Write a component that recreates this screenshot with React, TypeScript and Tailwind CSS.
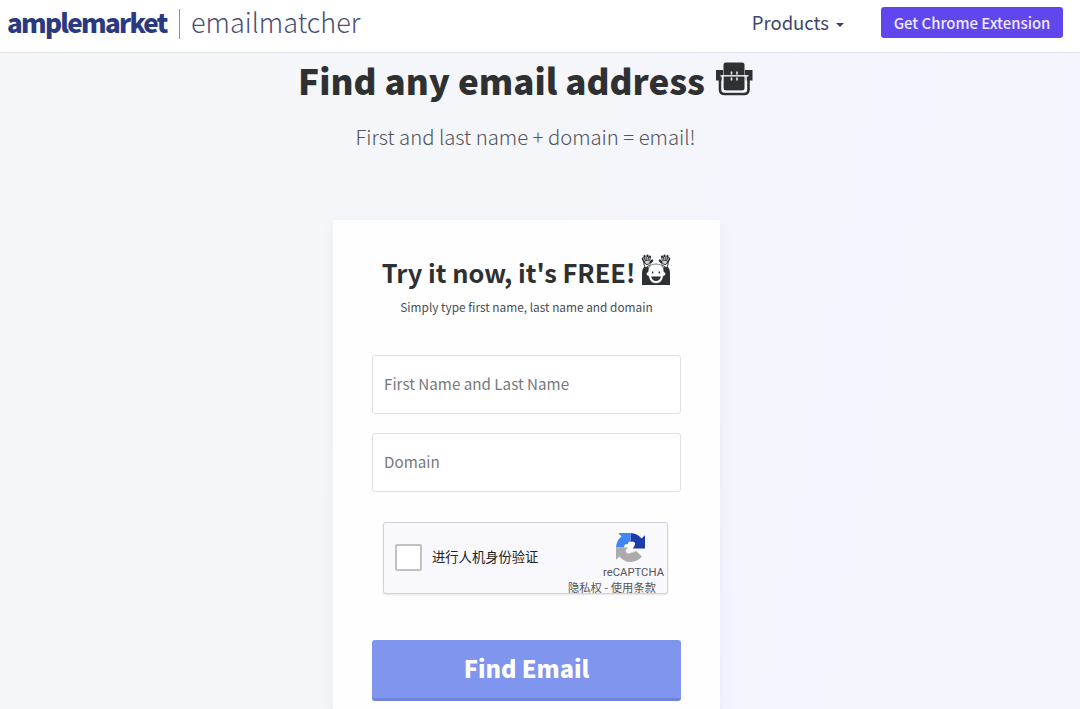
import React from "react";

const TurtleShellIcon = () => (
  <svg viewBox="0 0 38 36" className="h-9 w-[38px] shrink-0" fill="none">
    <path d="M1 9H8V19.500H1zM30 9H37.500V19.500H30z" fill="#2e3032" />
    <path d="M5 17V28.500Q5 33 9.500 33H29Q33.500 33 33.500 28.500V17" stroke="#2e3032" strokeWidth="2.600" />
    <rect x="8.500" y="1.500" width="21" height="28" rx="2.500" fill="#2e3032" />
    <path d="M5.500 14.800H33.500" stroke="#f4f6f9" strokeWidth="1.400" />
    <path d="M7.500 15V27.500Q7.500 30.500 10.500 30.500H28Q31 30.500 31 27.500V15" stroke="#f4f6f9" strokeWidth="1.600" />
    <path d="M16.500 10.500v3M22 10.500v3M16.500 16.500v3M22 16.500v3" stroke="#f4f6f9" strokeWidth="1.500" />
  </svg>
);

const Hand = () => (
  <g strokeLinecap="round" strokeLinejoin="round">
    <path d="M3.500 8.500 1.800 4.500M4.500 6.500 3.500 2M6.500 6 6.500 1.500M8 6.500 9 2.500M9.500 8.500 11.200 6.500M4.500 8.500H8.500" stroke="#2e3032" strokeWidth="2.200" />
    <path d="M3.500 6.500H9V8.500Q8 11 5 10.500Q3.500 9.500 3.500 6.500z" fill="#d4d5d6" stroke="#2e3032" strokeWidth="1" />
    <path d="M3.500 6.500 2.500 4.500M5 6 4.300 3.500M6.600 6V3.500M8 6.500 8.500 4" stroke="#c4c5c6" strokeWidth=".9" />
  </g>
);

const CelebrateIcon = () => (
  <svg viewBox="0 0 30 32" className="h-8 w-[30px] shrink-0" fill="none">
    <path d="M1 31V19Q1 14.500 4 12L11 15H19L26 12Q29 14.500 29 19V31z" fill="#2e3032" />
    <path d="M2.500 9.500 4.500 14 9.500 10.500M27.500 9.500 25.500 14 20.500 10.500" fill="#fff" stroke="#2e3032" strokeWidth="1" />
    <Hand />
    <g transform="translate(30 0) scale(-1 1)">
      <Hand />
    </g>
    <path d="M7 18Q7 10 15 10Q23 10 23 18Q25 18 24.500 20.500Q24 22 22.500 22Q21 29.500 15 29.500Q9 29.500 7.500 22Q6 22 5.500 20.500Q5 18 7 18z" fill="#fff" stroke="#2e3032" strokeWidth=".6" />
    <path d="M11.700 17.500v2M18.300 17.500v2" stroke="#2e3032" strokeWidth="1.300" />
    <path d="M10 22.500H20Q18.500 27 15 27Q11.500 27 10 22.500z" fill="#2e3032" />
  </svg>
);

const RecaptchaLogo = () => (
  <svg viewBox="0 0 64 64" className="h-[29px] w-[29px]">
    <path d="M64 34V4.700l-7.600 7.600A32 32 0 0 0 32 0V20Q37 17 40 20Q43 22 42 26L37 34z" fill="#1c3aa9" />
    <path d="M32 0H4.700l7.600 7.600A32 32 0 0 0 0 32H18Q17 27 21 25Q24 23 27 25Q25 20 32 18z" fill="#4285f4" />
    <path d="M0 32v27.300l7.600-7.600A32 32 0 0 0 32 64c10 0 19-4.500 25-12L44 39Q40 44 34 43Q30 47 24 44Q20 42 22 37L27 32z" fill="#ababab" />
  </svg>
);

const Navbar = () => (
  <header className="flex h-[53px] shrink-0 items-start border-b border-[#e0e3e7] bg-white pr-[17px] pl-[7px]">
    <div className="flex items-center pt-[4px] text-[#2b3a80]">
      <span className="w-[161px] text-[26px] leading-[36px] font-black tracking-[-1.7px]">
        amplemarket
      </span>
      <span className="mx-[11px] mt-1 h-[30px] w-px bg-[#8c90ae]" />
      <span className="text-[27px] leading-[36px] font-light text-[#4c4f75]">emailmatcher</span>
    </div>
    <nav className="ml-auto flex items-start">
      <a className="mt-[8px] flex items-center text-[18.5px] leading-7 text-[#41456f]">
        Products
        <span className="mt-[5px] ml-[7px] border-x-4 border-t-4 border-x-transparent border-t-[#3a3d5c]" />
      </a>
      <button className="mt-[7px] ml-[37px] h-[31px] w-[182px] rounded-[3px] bg-[#6047ed] text-[14.9px] leading-[30px] font-medium whitespace-nowrap text-[#eeeaff]">
        Get Chrome Extension
      </button>
    </nav>
  </header>
);

const Recaptcha = () => (
  <div className="mt-[30px] ml-[11px] flex h-[72px] w-[285px] justify-between rounded-[3px] border border-[#d3d3d6] bg-[#f9f8fc] shadow-[0_1px_2px_rgba(0,0,0,0.1)]">
    <div className="flex items-center pb-[2px] pl-[11px]">
      <span className="h-[27px] w-[27px] rounded-[2px] border-2 border-[#c1c1c4] bg-white" />
      <span className="ml-[10px] text-[13.3px] leading-5 text-[#222]">进行人机身份验证</span>
    </div>
    <div className="flex flex-col items-end pt-[10px] pr-[3px] text-[#555]">
      <span className="mr-[19px]">
        <RecaptchaLogo />
      </span>
      <span className="mt-[4px] font-['Roboto','Liberation_Sans',sans-serif] text-[11.3px] leading-[14px] whitespace-nowrap">
        reCAPTCHA
      </span>
      <span className="mr-2 text-[11.3px] leading-[14px] whitespace-nowrap">隐私权 - 使用条款</span>
    </div>
  </div>
);

const inputClass =
  "block h-[59px] w-full rounded-[3px] border border-[#dfdfe4] bg-white px-[11px] pb-[3px] text-[15.2px] placeholder:text-[#77797b] placeholder:opacity-100";

const EmailForm = () => (
  <form className="mt-[69px] h-[520px] w-[387px] bg-[#fefeff] px-[39px] pt-[32px] shadow-[0_8px_16px_rgba(60,70,120,0.06)]">
    <h2 className="flex h-[40px] items-center justify-center text-[25.4px] leading-10 font-bold whitespace-nowrap text-[#2e3032]">
      Try it now, it's FREE!
      <span className="mb-[4px] ml-[6px]">
        <CelebrateIcon />
      </span>
    </h2>
    <p className="mt-[5px] text-center text-[11.85px] leading-5 whitespace-nowrap text-[#4b4d50]">
      Simply type first name, last name and domain
    </p>
    <div className="mt-[38px] space-y-[19px]">
      <input className={inputClass} placeholder="First Name and Last Name" />
      <input className={inputClass} placeholder="Domain" />
    </div>
    <Recaptcha />
    <button
      type="button"
      className="mt-[46px] block h-[61px] w-full rounded-[3px] border-b-[3px] border-[#6f83d8] bg-[#8095ee] pb-[2px] text-[23.5px] leading-[56px] font-black text-white"
    >
      Find Email
    </button>
  </form>
);

export default function App() {
  return (
    <div className="flex h-[709px] w-[1080px] flex-col overflow-hidden bg-[linear-gradient(100deg,#f4f7f8_0%,#f5f6fa_50%,#f4f4fe_75%,#f4f4fd_100%)] font-['Noto_Sans_CJK_SC',sans-serif]">
      <Navbar />
      <main className="flex w-[1053px] flex-col items-center">
        <h1 className="mr-[2px] flex h-[54px] items-center text-[35px] leading-[54px] font-black whitespace-nowrap text-[#2e3032]">
          Find any email address
          <span className="mb-[3px] ml-[10px]">
            <TurtleShellIcon />
          </span>
        </h1>
        <p className="mt-[14px] mr-[2px] text-[20.3px] leading-[30px] font-light text-[#505358]">
          First and last name + domain = email!
        </p>
        <EmailForm />
      </main>
    </div>
  );
}
